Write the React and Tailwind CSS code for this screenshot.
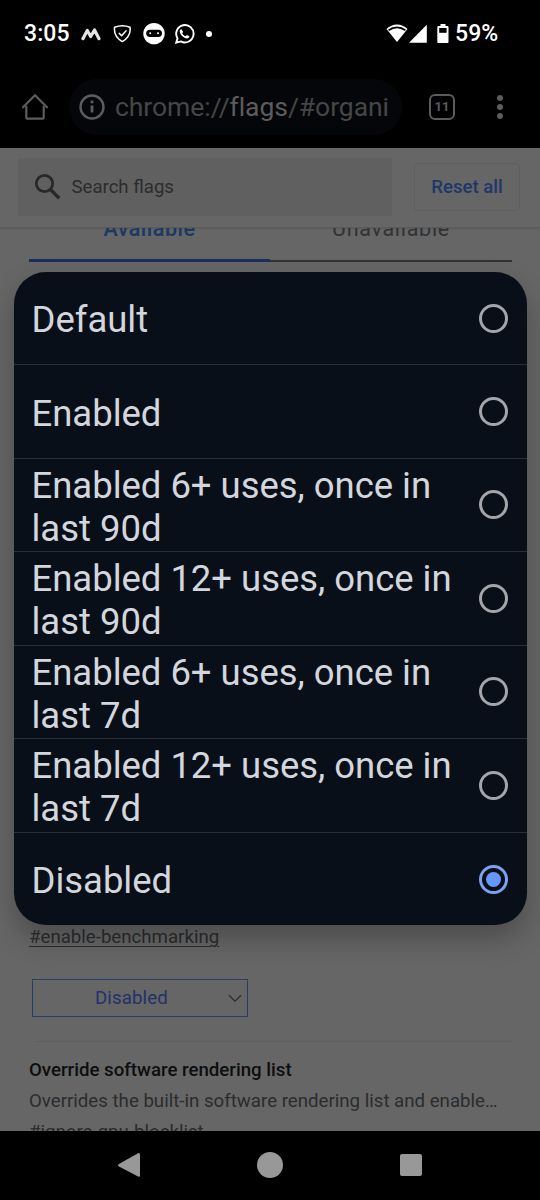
const OPTIONS = [
  'Default',
  'Enabled',
  'Enabled 6+ uses, once in last 90d',
  'Enabled 12+ uses, once in last 90d',
  'Enabled 6+ uses, once in last 7d',
  'Enabled 12+ uses, once in last 7d',
  'Disabled',
];

function StatusBar() {
  return (
    <div className="flex h-[68px] shrink-0 items-center bg-black pl-6 pr-[40px] text-[23px] font-medium text-white">
      <span className="w-[57px] whitespace-nowrap tracking-[0.1px]">3:05</span>
      <svg className="h-6 w-[20px]" viewBox="0 0 20 24" fill="none" stroke="#e4e4e4" strokeWidth="3.2" strokeLinecap="round" strokeLinejoin="round">
        <path d="M1.900 16.700 6.300 8.500 9.700 14.500 13.500 8 18 16.700" />
      </svg>
      <svg className="ml-3 h-6 w-[19px]" viewBox="0 0 19 24" fill="none" stroke="#fff" strokeWidth="1.5" strokeLinejoin="round" strokeLinecap="round">
        <path d="M9.300 3.700c2.500 0 5.200.5 7.700 1.500.9 5.800-1 10.300-7.700 14.400C2.600 15.500.7 11 1.600 5.200 4.100 4.200 6.800 3.700 9.300 3.700Z" />
        <path d="m6.200 11.300 2.400 2.500 4.500-5" />
      </svg>
      <svg className="ml-[11px] h-6 w-[22px]" viewBox="0 0 22 24">
        <circle cx="11" cy="11.600" r="10.700" fill="#fff" />
        <rect x="3.200" y="7.700" width="15.800" height="7.200" rx="3.600" fill="#000" />
        <circle cx="7.200" cy="11.300" r="1" fill="#fff" />
        <circle cx="15" cy="11.300" r="1" fill="#fff" />
      </svg>
      <svg className="ml-[9px] h-6 w-[21px]" viewBox="0 0 21 24">
        <path d="M2.200 20.700 3.500 16.300A8.700 8.700 0 1 1 6.800 19.400Z" fill="none" stroke="#fff" strokeWidth="1.900" />
        <path d="M7.600 7.200c-.6-.2-1.900.7-1.900 2.200 0 2.700 4.200 7 7.200 7 1.500 0 2.600-1.100 2.500-2.200l-2.600-1.300-1.300 1.300c-1.400-.5-2.700-1.700-3.300-3l.9-1.200Z" fill="#fff" />
      </svg>
      <span className="ml-[11px] size-1.5 rounded-full bg-white" />
      <div className="ml-auto flex items-center">
        <svg className="h-6 w-[22px]" viewBox="0 0 22 24">
          <path d="M.5 7C6.500.9 15.500.9 21.500 7L11 20Z" fill="#fff" />
          <path d="M2.600 8.200C7.700 4.600 14.300 4.600 19.400 8.200" fill="none" stroke="#000" strokeWidth="1.800" />
        </svg>
        <svg className="ml-[1px] h-6 w-[18px]" viewBox="0 0 18 24"><path d="M0 20.700 17.800 2.700v18Z" fill="#fff" /></svg>
        <svg className="ml-[10px] h-6 w-[12px]" viewBox="0 0 12 24">
          <path d="M3.500 2h5v2H10.500a1 1 0 0 1 1 1V20a1 1 0 0 1-1 1H1.300a1 1 0 0 1-1-1V5a1 1 0 0 1 1-1H3.500Z" fill="#fff" />
          <path d="M2.200 6h7.400v4.800H2.200Z" fill="#000" />
        </svg>
        <span className="ml-[6px] w-[45px] whitespace-nowrap tracking-[0.1px]">59%</span>
      </div>
    </div>
  );
}

function Toolbar() {
  return (
    <div className="flex h-20 shrink-0 items-center bg-black pb-[3px] pl-[22px] text-[#5c5c5c]">
      <svg className="h-[26px] w-[26px]" viewBox="0 0 26 26" fill="none" stroke="currentColor" strokeWidth="2.200" strokeLinejoin="round" strokeLinecap="round">
        <path d="M4.300 12.500V23.200a1.500 1.500 0 0 0 1.500 1.500H20.200a1.500 1.500 0 0 0 1.500-1.500V12.500" />
        <path d="M1 13.200 13 1.200 25 13.200" strokeLinejoin="miter" />
      </svg>
      <div className="ml-[21px] flex h-[56px] w-[333px] items-center overflow-hidden rounded-full bg-[#040609] pl-[10px]">
        <svg className="h-[26px] w-[26px] shrink-0" viewBox="0 0 26 26" fill="none" stroke="currentColor" strokeWidth="2.400">
          <circle cx="13" cy="13" r="11.500" />
          <path d="M13 11.500v7M13 6.500v2.700" strokeWidth="2.800" />
        </svg>
        <span className="ml-[10px] whitespace-nowrap pt-px text-[26.500px] tracking-[-0.05px] text-[#464646]">
          chrome://<span className="text-[#5c5c5c]">flags</span>/#organi
        </span>
      </div>
      <div className="ml-[27px] flex h-[26px] w-[26px] items-center justify-center rounded-[6px] border-[2.400px] border-[#5c5c5c] text-[13px] font-bold">11</div>
      <div className="ml-[41.500px] flex flex-col items-center gap-[3px]">
        <span className="size-1.5 rounded-full bg-[#5c5c5c]" />
        <span className="size-1.5 rounded-full bg-[#5c5c5c]" />
        <span className="size-1.5 rounded-full bg-[#5c5c5c]" />
      </div>
    </div>
  );
}

function FlagsPage() {
  return (
    <div className="flex h-[983px] shrink-0 flex-col overflow-hidden bg-[#666]">
      <div className="flex h-[80px] shrink-0 items-center border-b border-[#5b5b5b] pb-px pl-[18px] pr-[20px] shadow-[0_1px_2px_rgba(0,0,0,0.12)]">
        <div className="flex h-[58px] w-[374px] items-center rounded-[2px] bg-[#606060] pl-[16px]">
          <svg className="h-[28px] w-[28px]" viewBox="0 0 28 28" fill="none" stroke="#272829" strokeWidth="2.700">
            <circle cx="10.500" cy="10.500" r="8.200" />
            <path d="m16.700 16.700 8.500 8.500" strokeWidth="3.400" />
          </svg>
          <span className="ml-[9.500px] pt-[2px] text-[18.600px] text-[#2b2c2d]">Search flags</span>
        </div>
        <div className="ml-auto flex h-[48px] w-[106px] items-center justify-center rounded-[4px] border border-[#5e5f60] pt-[2px] text-[18.600px] font-medium text-[#20376a]">Reset all</div>
      </div>
      <div className="flex h-[34px] shrink-0 overflow-hidden pl-[29px] pr-[28px] text-[21.500px] leading-[24px]">
        <div className="flex h-[34px] w-[241px] justify-center border-b-[3px] border-[#192f5c] text-[#1c3864]">
          <span className="-mt-[11px] font-medium tracking-[0.5px]">Available</span>
        </div>
        <div className="flex h-[34px] flex-1 justify-center border-b-2 border-[#303234] text-[#303234]">
          <span className="-mt-[11px] tracking-[0.7px]">Unavailable</span>
        </div>
      </div>
      <div className="flex flex-col pl-[29px] pr-[28px] pt-[664px] text-[18.660px] leading-[22px] text-[#2a2c2e]">
        <span className="w-fit underline decoration-1 underline-offset-[3px]">#enable-benchmarking</span>
        <div className="ml-[3px] mt-[31px] flex h-[38px] w-[216px] items-center border border-[#263d66] pl-[62px] pr-[5px] text-[#22316a]">
          <span className="tracking-[0.1px]">Disabled</span>
          <svg className="ml-auto h-[9px] w-[14px]" viewBox="0 0 14 9" fill="none" stroke="#2b2d31" strokeWidth="1.300"><path d="m1 1.200 6 6 6-6" /></svg>
        </div>
        <div className="ml-[6px] mt-[24px] h-px bg-[#5f5f5f]" />
        <div className="mt-[17px] whitespace-nowrap font-medium text-[#0d0e0f]">Override software rendering list</div>
        <div className="mt-[9px] whitespace-nowrap">Overrides the built-in software rendering list and enable…</div>
        <div className="mt-[9px] w-fit whitespace-nowrap underline decoration-1">#ignore-gpu-blocklist</div>
      </div>
    </div>
  );
}

function NavBar() {
  return (
    <div className="flex h-[69px] shrink-0 items-center bg-black pb-px pl-[117px] text-[#989898]">
      <svg className="h-[26px] w-[24px]" viewBox="0 0 24 26"><path d="M2 12 21 1.300Q23 .5 23 2.600V23.300Q23 25.500 21 24.500L2 14.500Q0 13.200 2 12Z" fill="currentColor" /></svg>
      <span className="ml-[116px] size-[26px] rounded-full bg-current" />
      <span className="ml-[117px] size-[22px] rounded-[2px] bg-current" />
    </div>
  );
}

function OptionsDialog() {
  return (
    <div role="radiogroup" className="absolute left-[13.5px] top-[272px] h-[653px] w-[513px] overflow-hidden rounded-[32px] bg-[#080f18] shadow-[0_14px_28px_rgba(0,0,0,0.25)]">
      {OPTIONS.map((label, i) => (
        <div
          key={label}
          role="radio"
          aria-checked={i === 6}
          className="flex h-[93.5px] items-center border-b border-[#2b2f37] pl-[18px] pr-[19px] text-[36.500px] leading-[43px] tracking-[-0.03px] text-[#d3d6dd] last:border-b-0 first:h-[93px]"
        >
          <span className={i === 0 || i === 6 ? 'w-[440px] pt-[3px]' : 'w-[440px] pt-[4px]'}>{label}</span>
          <span
            className={
              i === 6
                ? 'ml-auto flex size-[29px] shrink-0 items-center justify-center rounded-full border-[3px] border-[#7c9ff0]'
                : 'ml-auto size-[29px] shrink-0 rounded-full border-[3px] border-[#a3a5aa]'
            }
          >
            {i === 6 && <span className="size-[15px] rounded-full bg-[#6698fa]" />}
          </span>
        </div>
      ))}
    </div>
  );
}

export default function App() {
  return (
    <div className="relative flex h-[1200px] w-[540px] flex-col overflow-hidden bg-black font-['Roboto',sans-serif]">
      <StatusBar />
      <Toolbar />
      <FlagsPage />
      <NavBar />
      <OptionsDialog />
    </div>
  );
}
